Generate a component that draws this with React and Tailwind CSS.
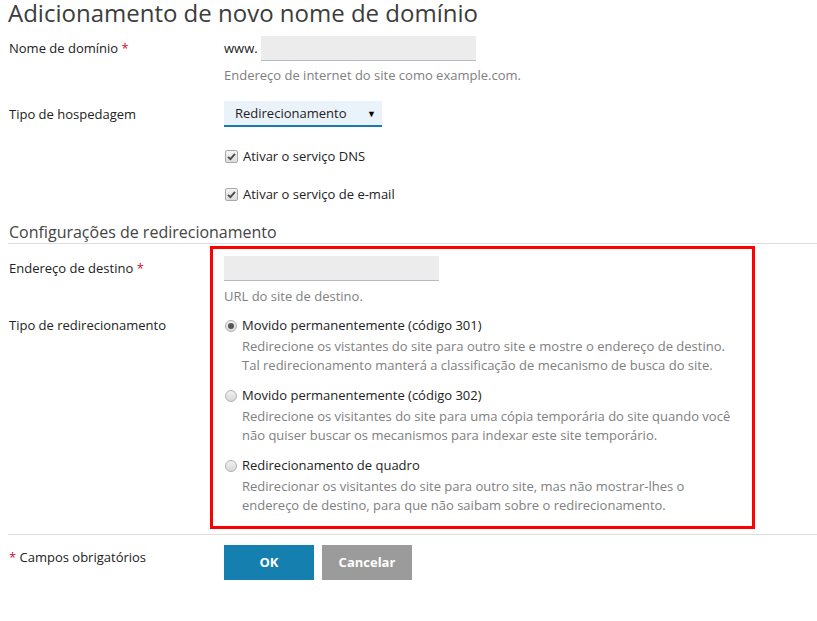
import React from 'react';

const Req = () => <span className="text-[#c8102e]">*</span>;

const Check = ({ children }) => (
  <div className="flex items-center h-[18px] leading-[18px]">
    <span className="w-[13px] h-[13px] ml-[1px] mr-[5px] rounded-[2px] border border-[#a9a9a9] bg-gradient-to-b from-[#f4f4f4] to-[#dcdcdc] flex items-center justify-center">
      <svg width="9" height="9" viewBox="0 0 9 9">
        <path d="M1 4.8 L3.4 7.2 L8 1.8" fill="none" stroke="#4a4a4a" strokeWidth="1.8" />
      </svg>
    </span>
    <span>{children}</span>
  </div>
);

const Radio = ({ checked, title, lines }) => (
  <div>
    <div className="flex items-center h-[19px] leading-[19px] mb-[2px]">
      <span className="w-[12px] h-[12px] ml-[1px] mr-[5px] rounded-full border border-[#b0b0b0] bg-gradient-to-b from-[#f2f2f2] to-[#d8d8d8] flex items-center justify-center">
        {checked && <span className="w-[6px] h-[6px] rounded-full bg-[#555]" />}
      </span>
      <span className="text-[#222]">{title}</span>
    </div>
    <div className="pl-[18px] leading-[19px] text-[#808080]">
      {lines.map((l, i) => <div key={i}>{l}</div>)}
    </div>
  </div>
);

export default function App() {
  return (
    <div className="relative w-[817px] h-[621px] bg-white overflow-hidden text-[13px] text-[#222]" style={{ fontFamily: '"Open Sans", "Liberation Sans", sans-serif' }}>
      <div className="pl-2">
        <h1 className="text-[24px] leading-[26px] text-[#3c3c3c] font-normal">Adicionamento de novo nome de domínio</h1>

        <div className="grid grid-cols-[216px_1fr] mt-[10px]">
          <div className="leading-[25px] pl-px">Nome de domínio <Req /></div>
          <div>
            <div className="flex items-center">
              <span className="leading-[25px] mr-[3px]">www.</span>
              <div className="w-[215px] h-[25px] bg-[#ececec] border-b border-[#b4bbc2]" />
            </div>
            <div className="mt-[5px] leading-[18px] text-[#808080]">Endereço de internet do site como example.com.</div>
          </div>
        </div>

        <div className="grid grid-cols-[216px_1fr] mt-[17px]">
          <div className="leading-[26px] pl-px">Tipo de hospedagem</div>
          <div>
            <div className="w-[158px] h-[26px] bg-[#ebf3fa] border-b-2 border-[#1a79ad] flex items-center justify-between pl-[11px] pr-[6px] pt-[2px]">
              <span>Redirecionamento</span>
              <span className="text-[9px] text-black">▼</span>
            </div>
            <div className="mt-[20px]"><Check>Ativar o serviço DNS</Check></div>
            <div className="mt-[20px]"><Check>Ativar o serviço de e-mail</Check></div>
          </div>
        </div>

        <div className="mt-[19px] pb-[1px] border-b border-[#dddddd]">
          <h2 className="text-[16px] leading-[20px] pl-px text-[#444] font-normal">Configurações de redirecionamento</h2>
        </div>

        <div className="grid grid-cols-[216px_1fr] mt-[12px]">
          <div className="leading-[25px] pl-px">Endereço de destino <Req /></div>
          <div>
            <div className="w-[215px] h-[25px] bg-[#ececec] border-b border-[#b4bbc2]" />
            <div className="mt-[6px] leading-[18px] text-[#808080]">URL do site de destino.</div>
          </div>
        </div>

        <div className="grid grid-cols-[216px_1fr] mt-[11px]">
          <div className="leading-[19px] pl-px">Tipo de redirecionamento</div>
          <div className="flex flex-col gap-[11px]">
            <Radio
              checked
              title="Movido permanentemente (código 301)"
              lines={[
                'Redirecione os vistantes do site para outro site e mostre o endereço de destino.',
                'Tal redirecionamento manterá a classificação de mecanismo de busca do site.',
              ]}
            />
            <Radio
              title="Movido permanentemente (código 302)"
              lines={[
                'Redirecione os visitantes do site para uma cópia temporária do site quando você',
                'não quiser buscar os mecanismos para indexar este site temporário.',
              ]}
            />
            <Radio
              title="Redirecionamento de quadro"
              lines={[
                'Redirecionar os visitantes do site para outro site, mas não mostrar-lhes o',
                'endereço de destino, para que não saibam sobre o redirecionamento.',
              ]}
            />
          </div>
        </div>

        <div className="mt-[19px] border-t border-[#dddddd]" />

        <div className="grid grid-cols-[216px_1fr] mt-[10px]">
          <div className="pt-[3px] leading-[18px] pl-px"><Req /> Campos obrigatórios</div>
          <div className="flex gap-[8px]">
            <button className="w-[90px] h-[35px] bg-[#1580b0] text-white font-bold">OK</button>
            <button className="w-[90px] h-[35px] bg-[#9b9b9b] text-white font-bold">Cancelar</button>
          </div>
        </div>
      </div>

      <div className="absolute left-[210px] top-[246px] w-[545px] h-[283px] border-[3px] border-[#ff0000] pointer-events-none" />
    </div>
  );
}
